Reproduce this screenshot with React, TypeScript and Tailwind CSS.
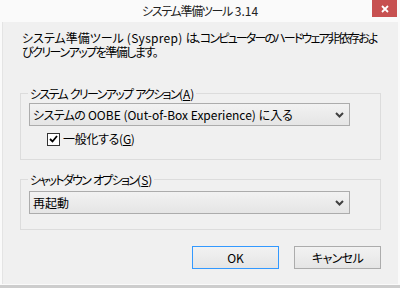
import React from "react";

function Chevron() {
  return (
    <svg width="9" height="6" viewBox="0 0 9 6" className="block">
      <path d="M1 1 L4.5 4.5 L8 1" fill="none" stroke="#404040" strokeWidth="2" />
    </svg>
  );
}

function Combo({ children }: { children: React.ReactNode }) {
  return (
    <div className="ml-[8px] w-[321px] h-[23px] border border-[#acacac] bg-gradient-to-b from-[#f2f2f2] to-[#e5e5e5] flex items-center justify-between pl-[3px] pr-[5px] whitespace-nowrap leading-[14px]">
      <span>{children}</span>
      <Chevron />
    </div>
  );
}

export default function App() {
  return (
    <div className="w-[400px] h-[288px] overflow-hidden bg-[#fafafa] flex flex-col text-[12px] text-black font-['Noto_Sans_CJK_JP','Noto_Sans',sans-serif] [font-feature-settings:'palt']">
      <div className="relative h-[22px] shrink-0 flex justify-center">
        <div className="pt-[3px] leading-[16px] text-[#222] whitespace-nowrap">
          <span className="tracking-[-1.3px]">システム準備ツール</span> 3.14
        </div>
        <div className="absolute right-[3px] top-0 w-[25px] h-[17px] bg-[#c75050] flex items-center justify-center">
          <svg width="8" height="8" viewBox="0 0 8 8">
            <path d="M1 1 L7 7 M7 1 L1 7" stroke="#ffffff" strokeWidth="1.8" />
          </svg>
        </div>
      </div>
      <div className="mx-[2px] h-[262px] shrink-0 bg-[#f0f0f0] border-l border-[#e4e4e4] flex flex-col">
        <p className="ml-[19px] mt-[9px] leading-[14px] whitespace-nowrap">
          <span>システム準備ツール</span>
          <span className="tracking-[0.3px]"> (Sysprep) </span>
          <span className="tracking-[-1.85px]">は、コンピューターのハードウェア非依存およ</span>
          <br />
          <span className="tracking-[-1.5px]">びクリーンアップを準備します。</span>
        </p>
        <fieldset className="mx-[17px] mt-[28px] h-[73px] border border-[#dcdcdc] px-0">
          <legend className="ml-[7px] px-[2px] leading-[13px] whitespace-nowrap">
            <span className="tracking-[-1.65px]">システム</span>{" "}
            <span className="tracking-[-1.65px]">クリーンアップ</span>{" "}
            <span className="tracking-[-1.65px]">アクション</span>(<span className="underline">A</span>)
          </legend>
          <div className="mt-[3px]">
            <Combo>
              <span className="tracking-[-0.6px]">システムの</span> OOBE (Out-of-Box Experience) に入る
            </Combo>
          </div>
          <div className="mt-[6px] ml-[26px] flex items-center gap-[3px] leading-[14px]">
            <div className="w-[13px] h-[13px] border border-[#333333] bg-white flex items-center justify-center">
              <svg width="9" height="8" viewBox="0 0 9 8">
                <path d="M1 4 L3.5 6.5 L8 1" fill="none" stroke="#000" strokeWidth="1.8" />
              </svg>
            </div>
            <span className="tracking-[-0.3px]">
              一般化する(<span className="underline">G</span>)
            </span>
          </div>
        </fieldset>
        <fieldset className="mx-[17px] mt-[13px] h-[57px] border border-[#dcdcdc] px-0">
          <legend className="ml-[7px] px-[2px] leading-[13px] whitespace-nowrap">
            <span className="tracking-[-1.7px]">シャットダウン</span>{" "}
            <span className="tracking-[-1.7px]">オプション</span>(<span className="underline">S</span>)
          </legend>
          <div className="mt-[5px]">
            <Combo>再起動</Combo>
          </div>
        </fieldset>
        <div className="mt-[16px] flex justify-end gap-[15px] pr-[17px]">
          <button className="w-[87px] h-[23px] border border-[#3399ff] bg-gradient-to-b from-[#f2f2f2] to-[#e5e5e5] leading-[14px]">
            OK
          </button>
          <button className="w-[87px] h-[23px] border border-[#acacac] bg-gradient-to-b from-[#f2f2f2] to-[#e5e5e5] leading-[14px] tracking-[-0.6px]">
            キャンセル
          </button>
        </div>
      </div>
      <div className="h-[1px] shrink-0 bg-[#fafafa]" />
      <div className="flex-1 bg-[#cdcdcd]" />
    </div>
  );
}
